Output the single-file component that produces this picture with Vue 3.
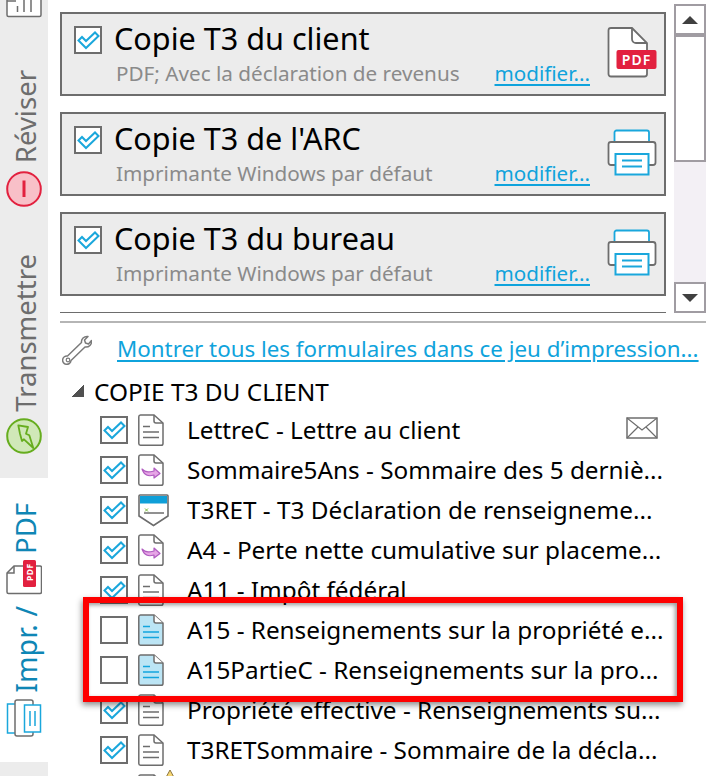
<script setup>
const cards = [
  { title: 'Copie T3 du client', sub: 'PDF; Avec la déclaration de revenus', icon: 'pdf' },
  { title: "Copie T3 de l'ARC", sub: 'Imprimante Windows par défaut', icon: 'printer' },
  { title: 'Copie T3 du bureau', sub: 'Imprimante Windows par défaut', icon: 'printer' }
]

const rows = [
  { label: 'LettreC - Lettre au client', checked: true, icon: 'doc', mail: true },
  { label: 'Sommaire5Ans - Sommaire des 5 derniè...', checked: true, icon: 'arrow' },
  { label: 'T3RET - T3 Déclaration de renseigneme...', checked: true, icon: 'form' },
  { label: 'A4 - Perte nette cumulative sur placeme...', checked: true, icon: 'arrow' },
  { label: 'A11 - Impôt fédéral', checked: true, icon: 'doc' },
  { label: 'A15 - Renseignements sur la propriété e...', checked: false, icon: 'blue' },
  { label: 'A15PartieC - Renseignements sur la pro...', checked: false, icon: 'blue' },
  { label: 'Propriété effective - Renseignements su...', checked: true, icon: 'doc' },
  { label: 'T3RETSommaire - Sommaire de la décla...', checked: true, icon: 'doc' },
  { label: '', checked: true, icon: 'doc', warn: true }
]

const tick = 'M2.500 12.500L6 9L10 13L19 4.500L22.500 8L10 20Z'
</script>

<template>
  <div class="page">
    <aside class="sidebar">
      <div class="tab tab-top">
        <svg width="48" height="18" viewBox="0 0 48 18">
          <path d="M7 -4V15a1.500 1.500 0 0 0 1.500 1.500H39.500A1.500 1.500 0 0 0 41 15V-4" fill="#fff" stroke="#6d6d6d" stroke-width="1.500" />
          <path d="M7 1H16M17.500 6V12M24 0V12M31 0V12" stroke="#6d6d6d" stroke-width="1.500" fill="none" />
        </svg>
      </div>
      <div class="tab tab-revise">
        <span class="vtext">Réviser</span>
        <svg width="36" height="36" viewBox="0 0 36 36">
          <circle cx="18" cy="18" r="16.800" fill="#f8c0c8" stroke="#e2213f" stroke-width="2" />
          <path d="M18 9.500V26" stroke="#e2213f" stroke-width="3" />
        </svg>
      </div>
      <div class="tab tab-send">
        <span class="vtext">Transmettre</span>
        <svg width="36" height="36" viewBox="0 0 36 36">
          <circle cx="18" cy="18" r="16.800" fill="#d0e8b8" stroke="#66ad1e" stroke-width="2" />
          <path d="M12.300 7.300L22 9L20 15.700L23.300 17.300L27.300 30L18 21.300L16 23L14 15.700Z" fill="none" stroke="#66ad1e" stroke-width="1.800" stroke-linejoin="round" />
        </svg>
      </div>
      <div class="tab tab-print">
        <span class="vtext active">PDF</span>
        <svg class="pdf-mini" width="36" height="36" viewBox="0 0 36 36">
          <path d="M1 13L8 6H34a1.500 1.500 0 0 1 1.500 1.500V32a1.500 1.500 0 0 1-1.500 1.500H2.500a1.500 1.500 0 0 1-1.500-1.500Z" fill="#fff" stroke="#6d6d6d" stroke-width="1.500" />
          <path d="M1 13H8V6" fill="none" stroke="#6d6d6d" stroke-width="1.500" />
          <rect x="17" y="0" width="13" height="27" rx="1.500" fill="#e2213f" />
          <text class="pdf-mini-text" transform="translate(26.500 21) rotate(-90)">PDF</text>
        </svg>
        <span class="vtext active vtext-impr">Impr. /</span>
        <svg width="36" height="38" viewBox="0 0 36 38">
          <rect x="1.500" y="5" width="10" height="29" fill="#fff" stroke="#1aa7dc" stroke-width="1.500" />
          <rect x="9" y="1" width="18" height="36" rx="2" fill="#fff" stroke="#6d6d6d" stroke-width="1.500" />
          <rect x="18.500" y="6" width="16" height="27" fill="#fff" stroke="#1aa7dc" stroke-width="1.500" />
          <path d="M24 12V27M29 12V27" stroke="#1aa7dc" stroke-width="1.500" />
        </svg>
      </div>
    </aside>

    <main class="main">
      <section class="top">
        <div class="cards">
          <div v-for="card in cards" :key="card.title" class="card">
            <span class="check card-check">
              <svg width="24" height="24" viewBox="0 0 24 24"><path :d="tick" fill="none" stroke="#1aa7dc" stroke-width="2" /></svg>
            </span>
            <div class="card-body">
              <div class="card-title">{{ card.title }}</div>
              <div class="card-foot">
                <span class="card-sub">{{ card.sub }}</span>
                <a class="link link-edit">modifier...</a>
              </div>
            </div>
            <svg v-if="card.icon === 'pdf'" class="card-icon icon-pdf" width="50" height="54" viewBox="0 0 50 54">
              <path d="M4 2H25L40 17V48a2.500 2.500 0 0 1-2.500 2.500H4A2.500 2.500 0 0 1 1.500 48V4.500A2.500 2.500 0 0 1 4 2Z" fill="#fff" stroke="#6d6d6d" stroke-width="1.800" />
              <path d="M25 2V13a4 4 0 0 0 4 4H40" fill="none" stroke="#6d6d6d" stroke-width="1.800" />
              <rect x="9.500" y="24" width="40" height="19" rx="2" fill="#e2213f" />
              <text class="pdf-text" x="29.500" y="38.500">PDF</text>
            </svg>
            <svg v-else class="card-icon icon-printer" width="50" height="48" viewBox="0 0 50 48">
              <path d="M7.500 13V3.500a2 2 0 0 1 2-2H40a2 2 0 0 1 2 2V13" fill="#fff" stroke="#1aa7dc" stroke-width="1.800" />
              <path d="M8 36H4a2.500 2.500 0 0 1-2.500-2.500V15.500A2.500 2.500 0 0 1 4 13H46a2.500 2.500 0 0 1 2.500 2.500V33.500A2.500 2.500 0 0 1 46 36H42" fill="#fff" stroke="#6d6d6d" stroke-width="1.800" />
              <rect x="8.500" y="25" width="33" height="20.500" fill="#fff" stroke="#1aa7dc" stroke-width="2" />
              <path d="M15 31.500H35M15 37.500H35" stroke="#1aa7dc" stroke-width="1.800" />
            </svg>
          </div>
          <div class="cards-rule"></div>
        </div>
        <div class="scrollbar">
          <div class="sb-btn"><span class="tri up"></span></div>
          <div class="sb-thumb"></div>
          <div class="sb-track"></div>
          <div class="sb-btn"><span class="tri down"></span></div>
        </div>
      </section>
      <div class="section-rule"></div>

      <section class="forms">
        <div class="link-row">
          <svg width="30" height="30" viewBox="0 0 30 30">
            <path d="M5.500 21L19.500 7.500C19 4 22 1 26 1.500L22.500 5L23.500 8L26.500 9L29.500 5.500C30 9.500 27 12.500 23 12L9 25.500A4.200 4.200 0 1 1 5.500 21Z" fill="#fff" stroke="#7a7a7a" stroke-width="1.500" stroke-linejoin="round" />
            <circle cx="6" cy="25" r="1.800" fill="none" stroke="#7a7a7a" stroke-width="1.200" />
          </svg>
          <a class="link link-all">Montrer tous les formulaires dans ce jeu d’impression...</a>
        </div>

        <div class="group">
          <span class="expander"></span>
          <span>COPIE T3 DU CLIENT</span>
        </div>

        <div v-for="(row, i) in rows" :key="i" class="row">
          <span class="check">
            <svg v-if="row.checked" width="24" height="24" viewBox="0 0 24 24"><path :d="tick" fill="none" stroke="#1aa7dc" stroke-width="2" /></svg>
          </span>

          <svg v-if="row.icon === 'form'" class="doc" width="32" height="33" viewBox="0 0 32 33">
            <path d="M1 2a1 1 0 0 1 1-1H29a1 1 0 0 1 1 1V22L15.500 31.500L1 22Z" fill="#fff" stroke="#6d6d6d" stroke-width="1.600" />
            <rect x="2" y="2" width="27" height="7.500" fill="#0f9fd8" />
            <path d="M7 14.500L10 17.500M10 14.500L7 17.500" stroke="#79b93a" stroke-width="1" />
            <path d="M6 19H26" stroke="#6d6d6d" stroke-width="1.500" />
          </svg>
          <svg v-else class="doc" width="26" height="33" viewBox="0 0 26 33">
            <path d="M2.500 1H16L25 9V29.500a1.800 1.800 0 0 1-1.800 1.800H2.500A1.800 1.800 0 0 1 .8 29.500V2.800A1.800 1.800 0 0 1 2.500 1Z" :fill="row.icon === 'blue' ? '#bce5f5' : '#fff'" stroke="#6d6d6d" stroke-width="1.500" />
            <path d="M16 1V7a2 2 0 0 0 2 2H25" :fill="row.icon === 'blue' ? '#fff' : 'none'" stroke="#6d6d6d" stroke-width="1.500" />
            <g v-if="row.icon === 'doc'" stroke="#6d6d6d" stroke-width="1.300">
              <path d="M5 12.500H12M5 18H21M5 23.500H21" />
            </g>
            <g v-if="row.icon === 'blue'" stroke="#12a5de" stroke-width="1.500">
              <path d="M5 12.500H12M5 18H21M5 23.500H21" />
            </g>
            <path v-if="row.icon === 'arrow'" d="M4 15C8 19 12 18 16 17V14L22 19.500L16 24V21C10 23 6 21 4 15Z" fill="#e7a6e6" stroke="#b05cc0" stroke-width="1.200" stroke-linejoin="round" />
          </svg>

          <span class="row-label">{{ row.label }}</span>

          <svg v-if="row.mail" class="mail" width="32" height="22" viewBox="0 0 32 22">
            <rect x="1" y="1" width="30" height="20" fill="#fff" stroke="#6d6d6d" stroke-width="1.500" />
            <path d="M1 1L16 13L31 1M1 21L12 10M31 21L20 10" fill="none" stroke="#6d6d6d" stroke-width="1.200" />
          </svg>
          <svg v-if="row.warn" class="warn" width="14" height="12" viewBox="0 0 14 12">
            <path d="M7 1L13 12H1Z" fill="#f7d774" stroke="#8a7440" stroke-width="1" />
          </svg>
        </div>
      </section>
    </main>

    <div class="highlight"></div>
  </div>
</template>

<style>
html, body {
  margin: 0;
  background: #fff;
}
</style>

<style scoped>
.page {
  position: relative;
  display: grid;
  grid-template-columns: 48px 1fr;
  width: 713px;
  height: 776px;
  overflow: hidden;
  background: #fff;
  font-family: "Noto Sans", "Open Sans", sans-serif;
  color: #000;
}

/* barre latérale */
.sidebar {
  display: flex;
  flex-direction: column;
  background: #ececec;
}

.tab {
  display: flex;
  flex-direction: column;
  align-items: center;
}

.tab-top {
  height: 18px;
}

.tab-revise {
  height: 189px;
  justify-content: flex-end;
  gap: 8px;
}

.tab-send {
  height: 271px;
  justify-content: flex-end;
  gap: 6px;
  padding-bottom: 24px;
  box-sizing: border-box;
}

.tab-print {
  height: 284px;
  background: #fff;
  padding-top: 25px;
  box-sizing: border-box;
  gap: 6px;
}

.pdf-mini {
  margin-bottom: 4px;
}

.vtext {
  writing-mode: vertical-rl;
  transform: rotate(180deg) translateX(-2px);
  font-size: 27.500px;
  line-height: 36px;
  color: #6d6d6d;
}

.vtext.active {
  color: #0f86b5;
}

.vtext-impr {
  font-size: 28.500px;
}

.pdf-mini-text {
  font-size: 8.500px;
  font-weight: 700;
  fill: #fff;
  letter-spacing: 0.500px;
}

/* zone du haut */
.main {
  min-width: 0;
}

.top {
  display: flex;
  gap: 8px;
  padding: 4px 7px 0 12px;
  height: 321px;
  box-sizing: border-box;
}

.section-rule {
  height: 2px;
  margin: 0 7px 0 12px;
  background: #b5b5b5;
}

.cards {
  flex: 1;
  display: flex;
  flex-direction: column;
  gap: 16px;
  padding-top: 8px;
}

.card {
  display: flex;
  align-items: flex-start;
  height: 84px;
  box-sizing: border-box;
  border: 2px solid #6d6d6d;
  background: #ececec;
  padding: 12px 7px 0 12px;
}

.card-body {
  flex: 1;
  min-width: 0;
  margin-left: 12px;
  margin-top: -9px;
}

.card-title {
  font-size: 30.600px;
  line-height: 42px;
}

.card-sub {
  font-size: 20.700px;
  color: #8a8a8a;
  padding-left: 2px;
}

.card-foot {
  display: flex;
  justify-content: space-between;
  align-items: baseline;
  padding-right: 17px;
}

.link {
  color: #0fa3dc;
  text-decoration: underline;
  text-underline-offset: 3px;
}

.link-edit {
  font-size: 20.600px;
}

.icon-pdf {
  margin-top: 0;
}

.icon-printer {
  margin-top: 3px;
}

.cards-rule {
  height: 1px;
  background: #6d6d6d;
}

.check {
  flex: none;
  display: flex;
  align-items: center;
  justify-content: center;
  width: 28px;
  height: 28px;
  box-sizing: border-box;
  border: 2px solid #6d6d6d;
  background: #fff;
}

/* barre de défilement */
.scrollbar {
  width: 32px;
  height: 309px;
  display: flex;
  flex-direction: column;
  flex: none;
}

.sb-btn {
  height: 31px;
  box-sizing: border-box;
  border: 2px solid #a09ca2;
  background: #fff;
  display: flex;
  align-items: center;
  justify-content: center;
}

.sb-thumb {
  height: 127px;
  box-sizing: border-box;
  border: 2px solid #a09ca2;
  background: #fff;
}

.sb-track {
  flex: 1;
  background: #f3f0f5;
}

.tri {
  width: 0;
  height: 0;
  border-left: 8px solid transparent;
  border-right: 8px solid transparent;
}

.tri.up {
  border-bottom: 8px solid #404040;
}

.tri.down {
  border-top: 8px solid #404040;
}

/* liste des formulaires */
.forms {
  padding-left: 12px;
}

.link-row {
  display: flex;
  align-items: center;
  gap: 25px;
  height: 54px;
  padding-left: 2px;
}

.link-all {
  font-size: 22.350px;
  white-space: nowrap;
  margin-top: -4px;
}

.group {
  display: flex;
  align-items: center;
  gap: 10px;
  height: 28px;
  margin-bottom: 5px;
  padding-left: 12px;
  font-size: 24.400px;
}

.expander {
  width: 12px;
  height: 12px;
  background: linear-gradient(135deg, transparent 50%, #505050 50%);
}

.row {
  display: flex;
  align-items: center;
  height: 40px;
  padding-left: 40px;
  position: relative;
}

.doc {
  flex: none;
  margin-left: 10px;
}

.row-label {
  position: absolute;
  left: 127px;
  font-size: 24.300px;
  white-space: nowrap;
  margin-top: -2px;
}

.mail {
  position: absolute;
  left: 566px;
  top: 7px;
}

.warn {
  position: absolute;
  left: 103px;
  top: -1px;
}

.pdf-text {
  font-size: 14px;
  font-weight: 600;
  fill: #fff;
  text-anchor: middle;
  letter-spacing: 1px;
}

/* encadré rouge */
.highlight {
  position: absolute;
  left: 83px;
  top: 597px;
  width: 600px;
  height: 105px;
  box-sizing: border-box;
  border: 6px solid #fe0000;
  box-shadow: -1px 3px 6px rgba(0, 0, 0, 0.45), inset -2px 2px 4px rgba(0, 0, 0, 0.4);
}
</style>
